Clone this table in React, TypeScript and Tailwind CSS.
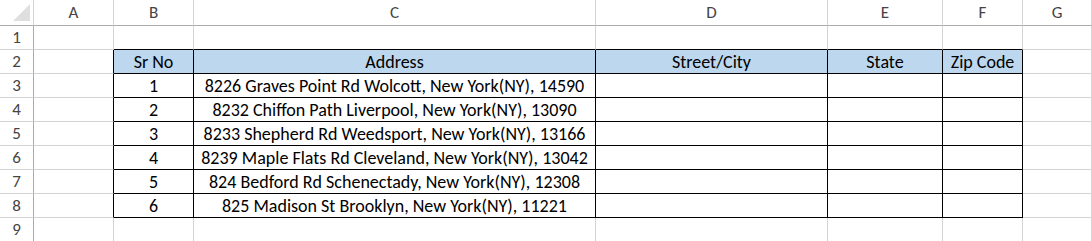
import React from "react";

const cols = ["A", "B", "C", "D", "E", "F", "G"];
const data: [string, string][] = [
  ["1", "8226 Graves Point Rd Wolcott, New York(NY), 14590"],
  ["2", "8232 Chiffon Path Liverpool, New York(NY), 13090"],
  ["3", "8233 Shepherd Rd Weedsport, New York(NY), 13166"],
  ["4", "8239 Maple Flats Rd Cleveland, New York(NY), 13042"],
  ["5", "824 Bedford Rd Schenectady, New York(NY), 12308"],
  ["6", "825 Madison St Brooklyn, New York(NY), 11221"],
];

const font = { fontFamily: "Carlito, Lato, 'Open Sans', sans-serif" };

export default function App() {
  const rows: React.ReactNode[] = [];

  rows.push(
    <div key="corner" className="relative h-[26px] border-r border-b border-r-[#d4d4d4] border-b-[#ababab] bg-white">
      <div className="absolute right-[3px] bottom-[4px] w-0 h-0 border-l-[17px] border-l-transparent border-b-[17px] border-b-[#dfdfdf]" />
    </div>
  );
  cols.forEach((c) => {
    rows.push(
      <div
        key={"h" + c}
        className="h-[26px] border-r border-b border-r-[#d4d4d4] border-b-[#ababab] flex items-center justify-center text-[17px] text-[#444]"
      >
        <span className="pt-[1px]">{c}</span>
      </div>
    );
  });

  for (let r = 1; r <= 9; r++) {
    rows.push(
      <div
        key={"r" + r}
        className="h-[24px] border-r border-b border-r-[#ababab] border-b-[#d4d4d4] flex items-center justify-center text-[17px] text-[#444]"
      >
        <span className="pt-[1px]">{r}</span>
      </div>
    );
    for (let ci = 0; ci < cols.length; ci++) {
      const inTable = r >= 2 && r <= 8 && ci >= 1 && ci <= 5;
      const header = r === 2 && inTable;
      let rightBlack = inTable;
      if (ci === 0 && r >= 2 && r <= 8) rightBlack = true;
      let bottomBlack = inTable;
      if (r === 1 && ci >= 1 && ci <= 5) bottomBlack = true;
      let content = "";
      if (header) content = ["", "Sr No", "Address", "Street/City", "State", "Zip Code"][ci];
      else if (inTable && r >= 3) {
        const d = data[r - 3];
        if (ci === 1) content = d[0];
        if (ci === 2) content = d[1];
      }
      rows.push(
        <div
          key={r + "-" + ci}
          className={
            "h-[24px] border-r border-b flex items-center justify-center text-[18px] text-black whitespace-nowrap overflow-hidden " +
            (rightBlack ? "border-r-black " : "border-r-[#d4d4d4] ") +
            (bottomBlack ? "border-b-black " : "border-b-[#d4d4d4] ") +
            (header ? "bg-[#bdd7ee]" : "bg-white")
          }
        >
          <span className="pt-[2px]">{content}</span>
        </div>
      );
    }
  }

  return (
    <div
      className="w-[1092px] h-[241px] overflow-hidden bg-white grid grid-cols-[34px_80px_80px_402px_232px_115px_80px_1fr] grid-rows-[26px_repeat(9,24px)]"
      style={font}
    >
      {rows}
    </div>
  );
}
